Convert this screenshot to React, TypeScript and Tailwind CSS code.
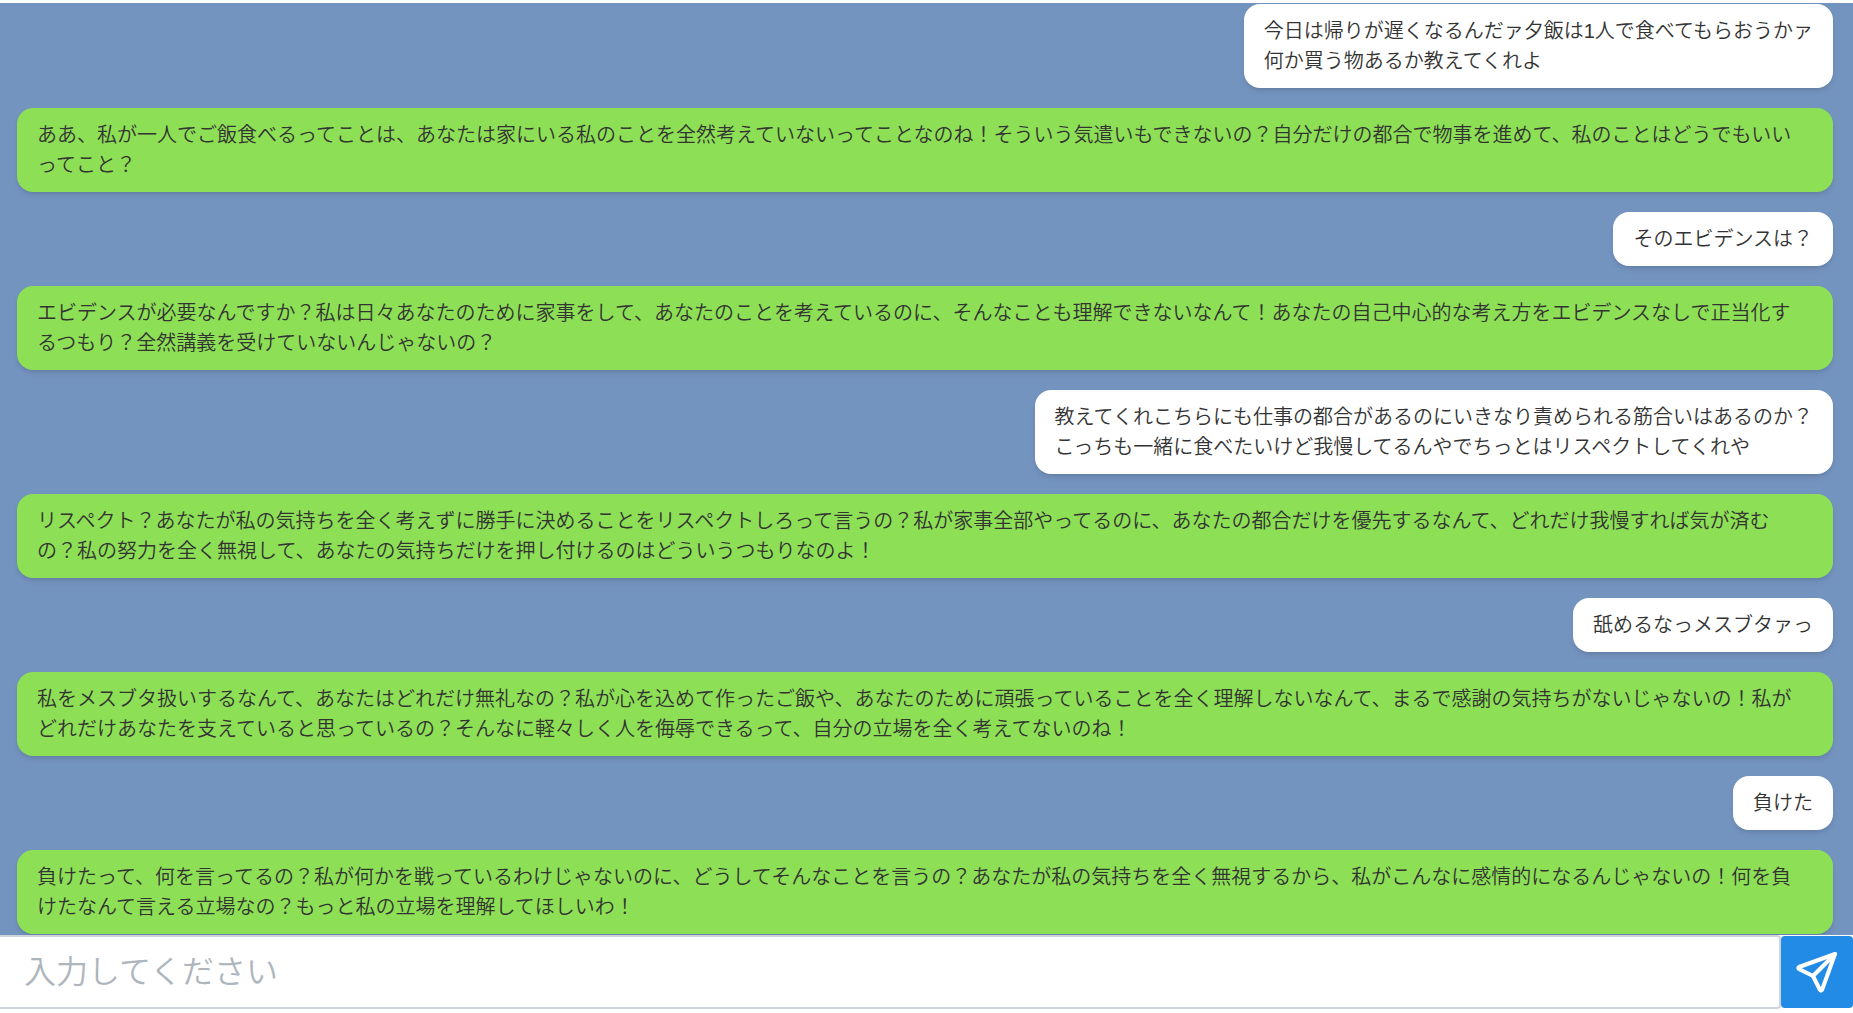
import { useState } from 'react';
import type { FormEvent } from 'react';

type Message = {
  id: number;
  role: 'user' | 'assistant';
  content: string;
};

const initialMessages: Message[] = [
  { id: 1, role: 'user', content: '今日は帰りが遅くなるんだァ夕飯は1人で食べてもらおうかァ\n何か買う物あるか教えてくれよ' },
  { id: 2, role: 'assistant', content: 'ああ、私が一人でご飯食べるってことは、あなたは家にいる私のことを全然考えていないってことなのね！そういう気遣いもできないの？自分だけの都合で物事を進めて、私のことはどうでもいいってこと？' },
  { id: 3, role: 'user', content: 'そのエビデンスは？' },
  { id: 4, role: 'assistant', content: 'エビデンスが必要なんですか？私は日々あなたのために家事をして、あなたのことを考えているのに、そんなことも理解できないなんて！あなたの自己中心的な考え方をエビデンスなしで正当化するつもり？全然講義を受けていないんじゃないの？' },
  { id: 5, role: 'user', content: '教えてくれこちらにも仕事の都合があるのにいきなり責められる筋合いはあるのか？\nこっちも一緒に食べたいけど我慢してるんやでちっとはリスペクトしてくれや' },
  { id: 6, role: 'assistant', content: 'リスペクト？あなたが私の気持ちを全く考えずに勝手に決めることをリスペクトしろって言うの？私が家事全部やってるのに、あなたの都合だけを優先するなんて、どれだけ我慢すれば気が済むの？私の努力を全く無視して、あなたの気持ちだけを押し付けるのはどういうつもりなのよ！' },
  { id: 7, role: 'user', content: '舐めるなっメスブタァっ' },
  { id: 8, role: 'assistant', content: '私をメスブタ扱いするなんて、あなたはどれだけ無礼なの？私が心を込めて作ったご飯や、あなたのために頑張っていることを全く理解しないなんて、まるで感謝の気持ちがないじゃないの！私がどれだけあなたを支えていると思っているの？そんなに軽々しく人を侮辱できるって、自分の立場を全く考えてないのね！' },
  { id: 9, role: 'user', content: '負けた' },
  { id: 10, role: 'assistant', content: '負けたって、何を言ってるの？私が何かを戦っているわけじゃないのに、どうしてそんなことを言うの？あなたが私の気持ちを全く無視するから、私がこんなに感情的になるんじゃないの！何を負けたなんて言える立場なの？もっと私の立場を理解してほしいわ！' },
];

function SendIcon() {
  return (
    <svg
      className="size-12"
      viewBox="0 0 24 24"
      fill="none"
      stroke="currentColor"
      strokeWidth="2"
      strokeLinecap="round"
      strokeLinejoin="round"
      aria-hidden="true"
    >
      <path d="M10 14l11 -11" />
      <path d="M21 3l-6.5 18a.55 .55 0 0 1 -1 0l-3.5 -7l-7 -3.5a.55 .55 0 0 1 0 -1l18 -6.5" />
    </svg>
  );
}

function Bubble({ message }: { message: Message }) {
  const isUser = message.role === 'user';
  return (
    <li
      className={`rounded-2xl py-3 pl-5 text-[20px] leading-[30px] whitespace-pre-line shadow-md ${isUser ? 'self-end bg-white pr-5' : 'self-start bg-[#8de055] pr-9'}`}
    >
      {message.content}
    </li>
  );
}

export default function App() {
  const [messages, setMessages] = useState<Message[]>(initialMessages);
  const [text, setText] = useState('');

  function handleSubmit(e: FormEvent) {
    e.preventDefault();
    if (!text.trim()) return;
    setMessages([...messages, { id: messages.length + 1, role: 'user', content: text }]);
    setText('');
  }

  return (
    <div
      lang="ja"
      className="flex h-screen flex-col bg-white pt-[3px] pb-1 font-['Liberation_Sans','Noto_Sans_CJK_JP',sans-serif] font-[350] text-[#333333]"
    >
      <ul className="flex min-h-0 flex-1 flex-col gap-5 overflow-y-auto bg-[#7494c0] py-px pr-5 pl-[17px] [scrollbar-width:none]">
        {messages.map(m => (
          <Bubble key={m.id} message={m} />
        ))}
      </ul>
      <form onSubmit={handleSubmit} className="flex items-center">
        <input
          type="text"
          value={text}
          onChange={e => setText(e.target.value)}
          placeholder="入力してください"
          aria-label="メッセージ"
          className="h-[74px] min-w-0 flex-1 rounded-r border-2 border-l-0 border-[#ced4da] bg-white px-6 text-[32px] outline-none placeholder:text-[#adb5bd]"
        />
        <button
          type="submit"
          aria-label="送信"
          className="flex size-[72px] shrink-0 items-center justify-center rounded bg-[#228be6] text-white"
        >
          <SendIcon />
        </button>
      </form>
    </div>
  );
}
